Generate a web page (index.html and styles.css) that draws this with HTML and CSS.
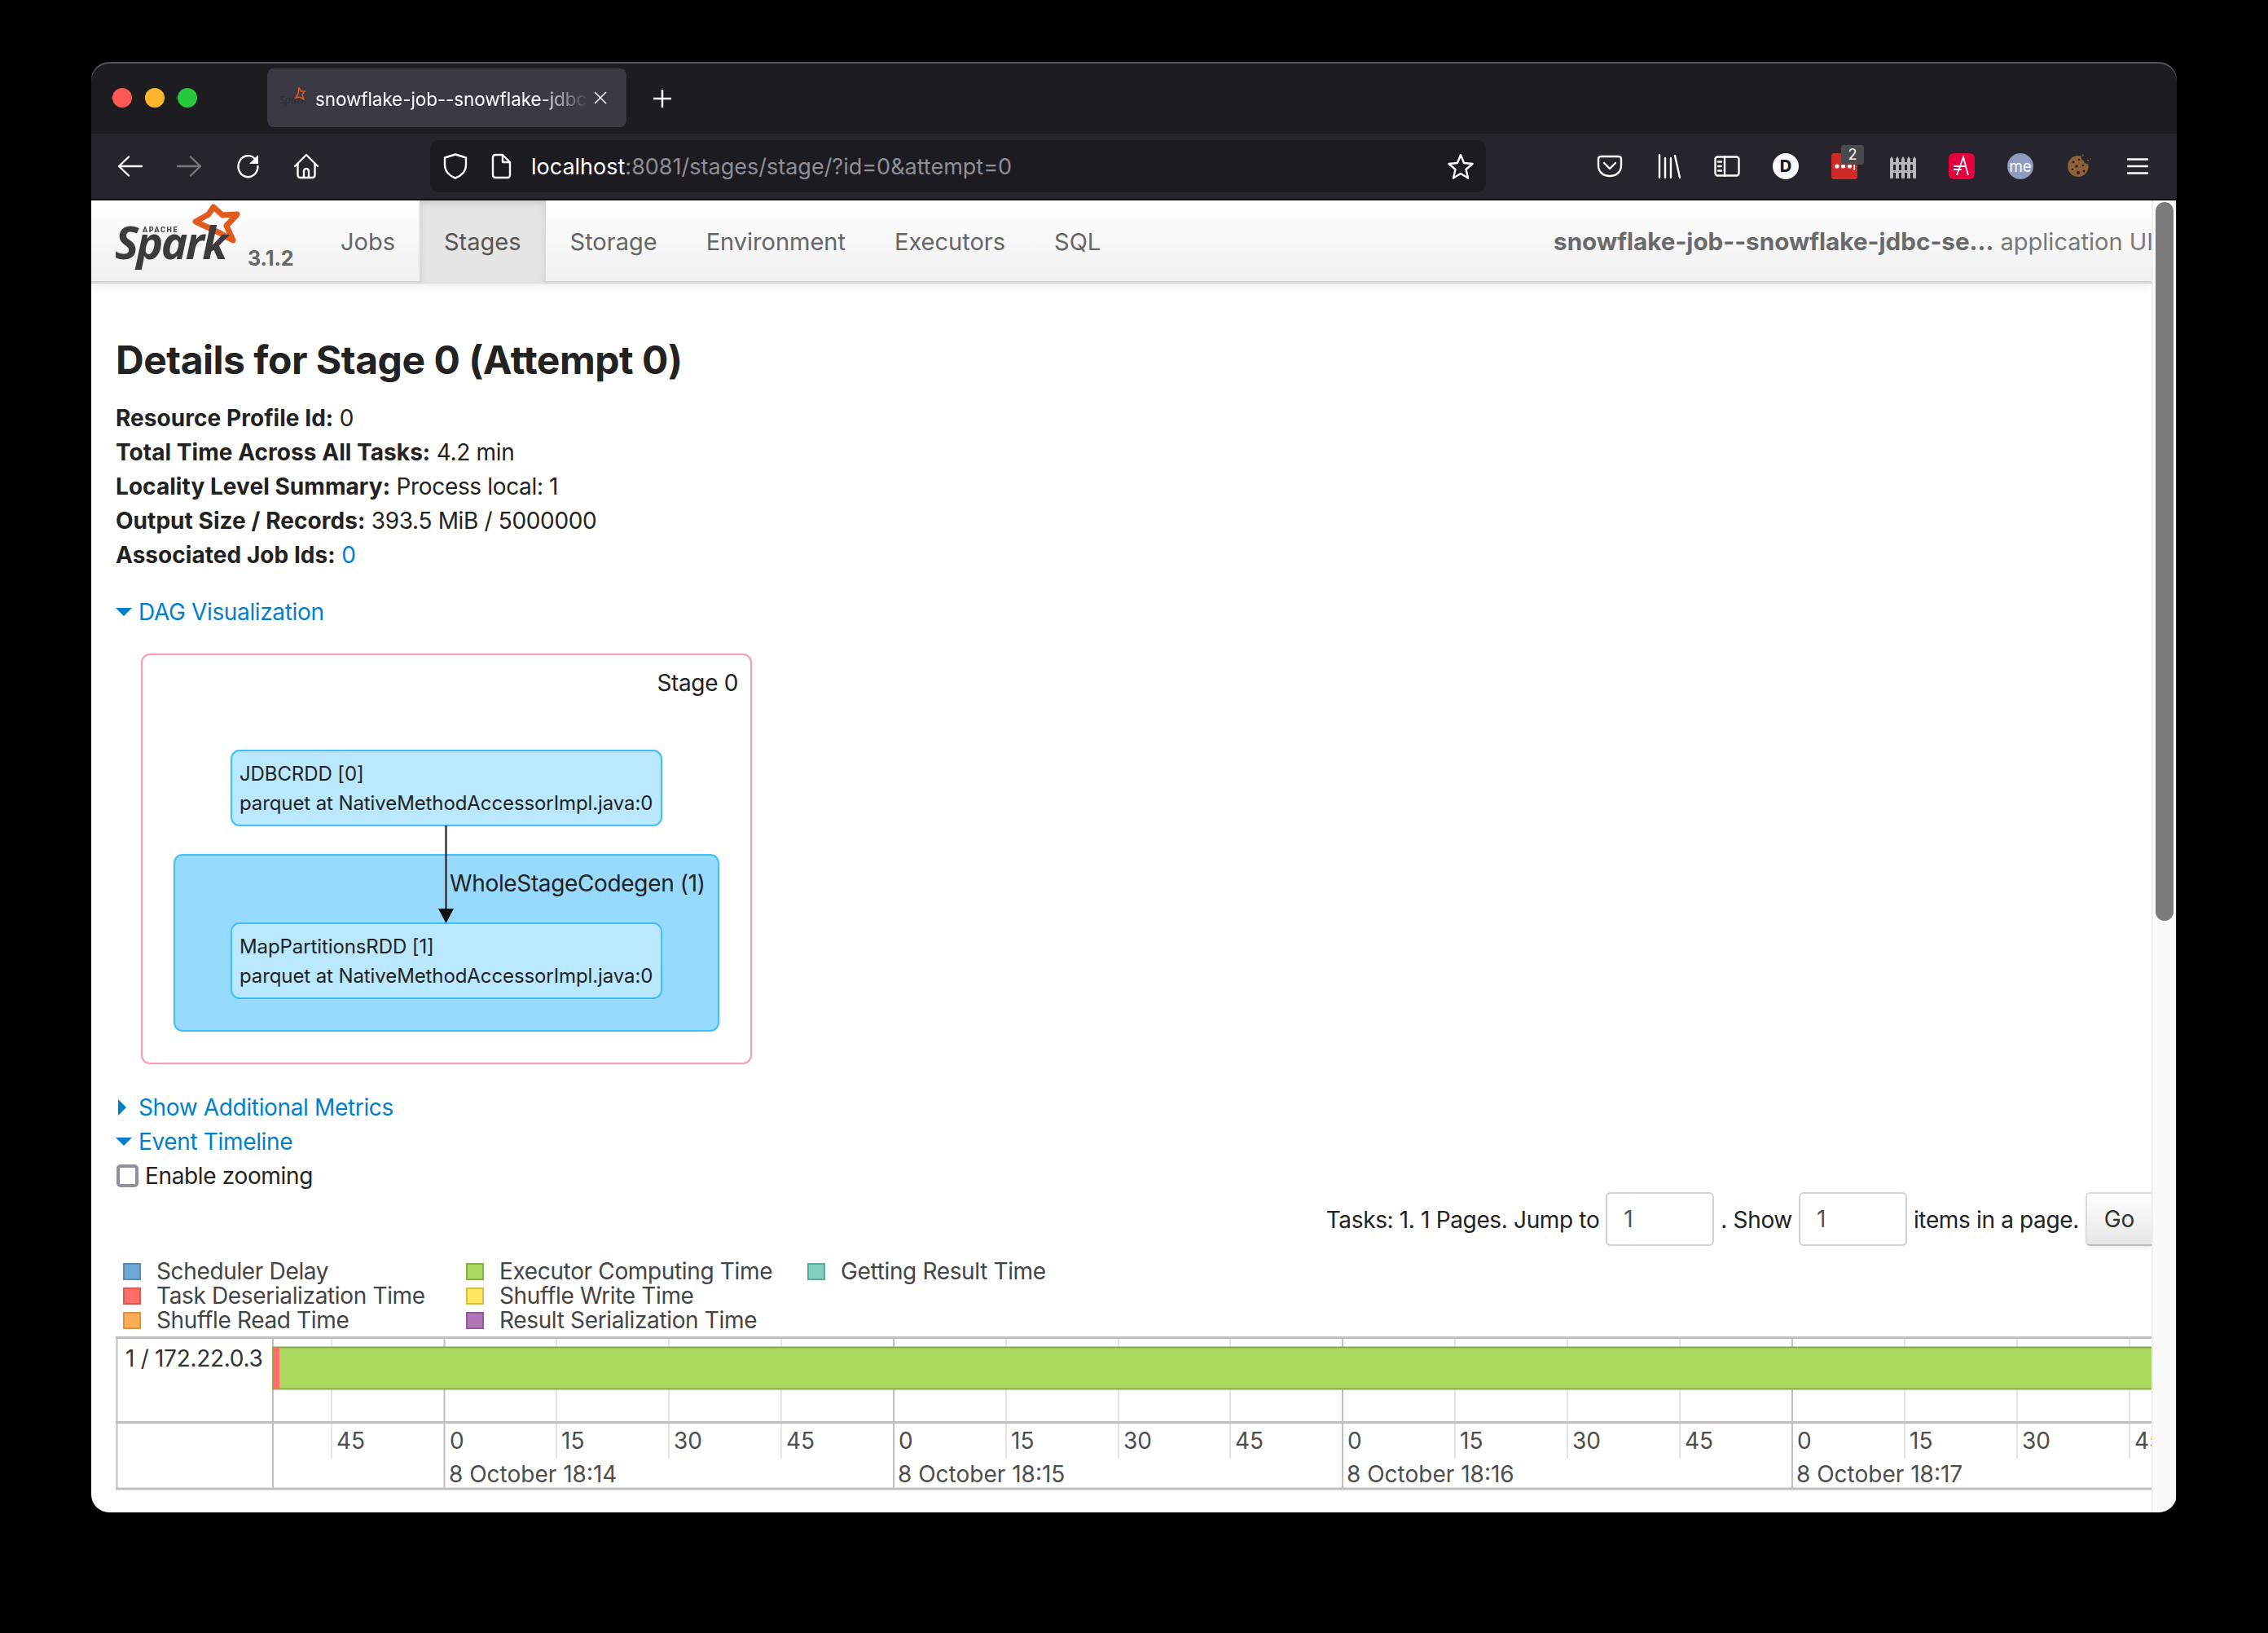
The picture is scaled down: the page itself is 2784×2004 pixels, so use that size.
FILE: index.html
```html
<!DOCTYPE html>
<html lang="en">
<head>
<meta charset="utf-8">
<title>snowflake-job--snowflake-jdbc-session - Details for Stage 0</title>
<link rel="stylesheet" href="styles.css">
</head>
<body>
<div class="window">
  <div class="tabbar">
    <div class="lights"><span class="light red"></span><span class="light yellow"></span><span class="light green"></span></div>
    <div class="tab">
      <svg class="favicon" viewBox="0 0 32 24"><text x="0" y="21" class="fav-text">Spark</text><path d="M24 1l2 5 5 0-3 4 2 6-5-3-5 1 3-5z" class="fav-star"/></svg>
      <span class="tab-title">snowflake-job--snowflake-jdbc-session</span>
      <svg class="tab-close" viewBox="0 0 16 16"><path d="M1 1l14 14M15 1L1 15"/></svg>
    </div>
    <svg class="newtab" viewBox="0 0 24 24"><path d="M12 1v22M1 12h22"/></svg>
  </div>
  <div class="toolbar">
    <div class="nav-buttons">
      <svg class="ic" viewBox="0 0 32 32"><path d="M2 16h28M14 4.500L2 16l12 11.500"/></svg>
      <svg class="ic dim" viewBox="0 0 32 32"><path d="M2 16h28M18 4.500L30 16 18 27.500"/></svg>
      <svg class="ic" viewBox="0 0 32 32"><path d="M25 7a12 13 0 1 0 3.500 9"/><path class="fill" d="M29 2v11H18z"/></svg>
      <svg class="ic" viewBox="0 0 32 32"><path d="M2 16L16 2l14 14M5.500 13v14a3 3 0 0 0 3 3h15a3 3 0 0 0 3-3V13M13 30v-8a3 3 0 0 1 6 0v8"/></svg>
    </div>
    <div class="urlbar">
      <svg class="ic" viewBox="0 0 32 32"><path d="M16 1.500l13 4v9c0 8-6 13.500-13 16-7-2.500-13-8-13-16v-9z"/></svg>
      <svg class="ic doc" viewBox="0 0 32 32"><path d="M6 5a3 3 0 0 1 3-3h9l9 9v16a3 3 0 0 1-3 3H9a3 3 0 0 1-3-3zM18 2v9h9"/></svg>
      <span class="url"><span class="url-host">localhost</span>:8081/stages/stage/?id=0&amp;attempt=0</span>
      <svg class="ic star" viewBox="0 0 32 32"><path d="M16 2l4 10 10.500 1-8 7 2.500 10.500L16 25l-9 5.500L9.500 20l-8-7L12 12z"/></svg>
    </div>
    <div class="addons">
      <svg class="ic" viewBox="0 0 32 32"><path d="M5 4h22a3 3 0 0 1 3 3v8c0 8-6 13-14 13S2 23 2 15V7a3 3 0 0 1 3-3z"/><path d="M9 12l7 7 7-7"/></svg>
      <svg class="ic" viewBox="0 0 32 32"><path d="M5 2v28M12 6v24M19 6v24M24 3l6 27"/></svg>
      <svg class="ic" viewBox="0 0 32 32"><rect x="1.500" y="4.500" width="29" height="23" rx="3"/><path d="M13 4.500v23M5 10.500h4M5 16h4M5 21.500h4"/></svg>
      <div class="addon round white"><span class="d-letter">D</span></div>
      <div class="addon badge-host">
        <svg class="addon-fill" viewBox="0 0 32 32"><rect width="32" height="32" rx="3" fill="#d02a26"/><circle cx="7" cy="16" r="2.600" fill="#fff"/><circle cx="14.500" cy="16" r="2.600" fill="#fff"/><circle cx="22.500" cy="16" r="2.600" fill="#fff"/><rect x="27.500" y="12" width="1.500" height="9" fill="#fff"/></svg>
        <span class="badge">2</span>
      </div>
      <svg class="addon-fill" viewBox="0 0 32 32"><g fill="#b8b8bb"><path d="M0 7l2-3 2 3v24H0zM7 7l2-3 2 3v24H7zM14 7l2-3 2 3v24h-4zM21 7l2-3 2 3v24h-4zM28 7l2-3 2 3v24h-4z"/><rect y="11" width="32" height="3"/><rect y="21" width="32" height="3"/></g></svg>
      <svg class="addon-fill" viewBox="0 0 32 32"><rect width="32" height="32" rx="6" fill="#e4003f"/><path d="M10 27L18 5l6 22M6 16h14M6 20h10" fill="none" stroke="#fff" stroke-width="1.800"/></svg>
      <div class="addon round me"><span>me</span></div>
      <svg class="addon-fill" viewBox="0 0 32 32"><path d="M15 3c2 0 3 .5 4 1-1 3 1 5 3 5 0 3 2 4 4 4 1 0 1.500 1 1.500 3 0 7-5.500 13-12.500 13S2 23 2 16 8 3 15 3z" fill="#8e6239"/><g fill="#2e1d10"><circle cx="9" cy="11" r="1.500"/><circle cx="16" cy="8" r="1.200"/><circle cx="13" cy="16" r="1.800"/><circle cx="21" cy="15" r="1.300"/><circle cx="8" cy="20" r="1.200"/><circle cx="15" cy="24" r="2"/><circle cx="22" cy="22" r="1.500"/></g><g fill="#8e6239"><circle cx="21" cy="2.500" r="1"/><circle cx="27" cy="9" r="1"/><circle cx="30" cy="7" r=".8"/></g></svg>
      <svg class="ic" viewBox="0 0 32 32"><path d="M4 7.500h24M4 16h24M4 24.500h24"/></svg>
    </div>
  </div>
  <div class="viewport">
    <div class="page">
      <header class="navbar">
        <a class="brand">
          <svg class="logo" viewBox="142 248 155 84">
            <path class="logo-star" d="M262 254l11 10 18-1-13 14 8 18-16-9-15-7-15-7 16-9z"/>
            <text class="logo-apache" x="175" y="285">APACHE</text>
            <text class="logo-spark" x="141" y="318">Spark</text>
          </svg>
          <span class="version">3.1.2</span>
        </a>
        <nav class="nav-links">
          <a class="nav-link">Jobs</a>
          <a class="nav-link active">Stages</a>
          <a class="nav-link">Storage</a>
          <a class="nav-link">Environment</a>
          <a class="nav-link">Executors</a>
          <a class="nav-link">SQL</a>
        </nav>
        <p class="app-title"><strong>snowflake-job--snowflake-jdbc-se...</strong> application UI</p>
      </header>
      <main class="content">
        <h1 class="title">Details for Stage 0 (Attempt 0)</h1>
        <ul class="summary">
          <li><strong>Resource Profile Id:</strong> 0</li>
          <li><strong>Total Time Across All Tasks:</strong> 4.2 min</li>
          <li><strong>Locality Level Summary:</strong> Process local: 1</li>
          <li><strong>Output Size / Records:</strong> 393.5 MiB / 5000000</li>
          <li><strong>Associated Job Ids:</strong> <a class="link">0</a></li>
        </ul>
        <a class="link toggle dag-toggle"><span class="arrow open"></span>DAG Visualization</a>
        <svg class="dag" viewBox="170 800 760 510">
          <rect class="stage" x="174" y="803" width="748" height="502" rx="10"/>
          <text class="dag-label" x="906" y="848" text-anchor="end">Stage 0</text>
          <rect class="cluster" x="214" y="1049" width="668" height="216" rx="10"/>
          <text class="dag-label" x="552" y="1094">WholeStageCodegen (1)</text>
          <rect class="rdd" x="284" y="921" width="528" height="92" rx="10"/>
          <text class="rdd-text" x="294" y="958">JDBCRDD [0]</text>
          <text class="rdd-text" x="294" y="994">parquet at NativeMethodAccessorImpl.java:0</text>
          <rect class="rdd" x="284" y="1133" width="528" height="92" rx="10"/>
          <text class="rdd-text" x="294" y="1170">MapPartitionsRDD [1]</text>
          <text class="rdd-text" x="294" y="1206">parquet at NativeMethodAccessorImpl.java:0</text>
          <path class="edge" d="M547.500 1013V1118"/>
          <path class="edge-head" d="M538 1115h19l-9.500 18z"/>
        </svg>
        <a class="link toggle"><span class="arrow closed"></span>Show Additional Metrics</a>
        <a class="link toggle"><span class="arrow open"></span>Event Timeline</a>
        <label class="zoom-check"><input type="checkbox" class="checkbox"><span>Enable zooming</span></label>
        <div class="pager">
          <span class="pager-text">Tasks: 1. 1 Pages. Jump to</span>
          <input class="pager-input" value="1">
          <span class="pager-text">. Show</span>
          <input class="pager-input" value="1">
          <span class="pager-text">items in a page.</span>
          <button class="go">Go</button>
        </div>
        <div class="legend">
          <div class="legend-item"><span class="swatch blue"></span>Scheduler Delay</div>
          <div class="legend-item"><span class="swatch coral"></span>Task Deserialization Time</div>
          <div class="legend-item"><span class="swatch orange"></span>Shuffle Read Time</div>
          <div class="legend-item"><span class="swatch lime"></span>Executor Computing Time</div>
          <div class="legend-item"><span class="swatch sun"></span>Shuffle Write Time</div>
          <div class="legend-item"><span class="swatch plum"></span>Result Serialization Time</div>
          <div class="legend-item"><span class="swatch teal"></span>Getting Result Time</div>
        </div>
        <svg class="timeline" viewBox="142 1640 2499 190">
          <g class="minor">
            <path d="M407 1641V1790M683 1641V1790M821 1641V1790M959 1641V1790M1235 1641V1790M1373 1641V1790M1510 1641V1790M1786 1641V1790M1924 1641V1790M2062 1641V1790M2338 1641V1790M2476 1641V1790M2614 1641V1790"/>
          </g>
          <path class="major" d="M545.500 1641V1827M1097 1641V1827M1648 1641V1827M2200 1641V1827M143.500 1641V1827M335 1641V1827"/>
          <path class="axis" d="M142 1641.500H2641M142 1745.500H2641M142 1827H2641"/>
          <rect class="bar-green" x="335" y="1653.500" width="2320" height="51"/>
          <rect class="bar-red" x="335" y="1653.500" width="8" height="51"/>
          <text class="tl-label" x="154" y="1677">1 / 172.22.0.3</text>
          <g class="tl-text">
            <text x="413" y="1778">45</text>
            <text x="552" y="1778">0</text><text x="689" y="1778">15</text><text x="827" y="1778">30</text><text x="965" y="1778">45</text>
            <text x="1103" y="1778">0</text><text x="1241" y="1778">15</text><text x="1379" y="1778">30</text><text x="1516" y="1778">45</text>
            <text x="1654" y="1778">0</text><text x="1792" y="1778">15</text><text x="1930" y="1778">30</text><text x="2068" y="1778">45</text>
            <text x="2206" y="1778">0</text><text x="2344" y="1778">15</text><text x="2482" y="1778">30</text><text x="2620" y="1778">45</text>
            <text x="551" y="1819">8 October 18:14</text>
            <text x="1102" y="1819">8 October 18:15</text>
            <text x="1653" y="1819">8 October 18:16</text>
            <text x="2205" y="1819">8 October 18:17</text>
          </g>
        </svg>
      </main>
    </div>
    <div class="scrollbar"><div class="thumb"></div></div>
  </div>
</div>
</body>
</html>
```
FILE: styles.css
```css
* { box-sizing: border-box; }
html, body { margin: 0; padding: 0; height: 2004px; overflow: hidden; background: #000; }
body { font-family: Inter, "Liberation Sans", sans-serif; }

.window {
  margin: 76px 0 0 112px;
  width: 2560px;
  height: 1780px;
  border-radius: 22px;
  overflow: hidden;
  background: #1c1c21;
  display: flex;
  flex-direction: column;
  box-shadow: inset 0 2px 0 #55555a;
}

/* Tab strip */
.tabbar { height: 88px; flex: none; display: flex; align-items: flex-start; }
.lights { display: flex; gap: 16px; padding: 32px 0 0 26px; width: 217px; flex: none; }
.light { width: 24px; height: 24px; border-radius: 50%; }
.light.red { background: #ff5a52; }
.light.yellow { background: #ffb52b; }
.light.green { background: #28c83c; }
.tab {
  margin-top: 8px;
  margin-left: -1px;
  width: 441px;
  height: 72px;
  border-radius: 8px;
  background: #3b3a44;
  display: flex;
  align-items: center;
  padding: 3px 20px 0 15px;
  flex: none;
}
.favicon { width: 32px; height: 24px; flex: none; margin-top: -8px; }
.fav-text { font-size: 13px; font-style: italic; fill: #2b2b2f; font-family: "Open Sans", sans-serif; }
.fav-star { fill: none; stroke: #d9581f; stroke-width: 1.6; }
.tab-title {
  margin-left: 12px;
  width: 335px;
  font-size: 22.500px;
  letter-spacing: -.1px;
  color: #fff;
  white-space: nowrap;
  overflow: hidden;
  -webkit-mask-image: linear-gradient(to right, #000 82%, transparent 100%);
  mask-image: linear-gradient(to right, #000 82%, transparent 100%);
}
.tab-close { width: 16px; height: 16px; margin: -3px 0 0 7px; flex: none; }
.tab-close path { stroke: #fff; stroke-width: 1.500; fill: none; }
.newtab { width: 24px; height: 24px; margin: 33px 0 0 32px; flex: none; }
.newtab path { stroke: #fff; stroke-width: 2.5; fill: none; }

/* Toolbar */
.toolbar {
  height: 82px;
  flex: none;
  background: #26252e;
  border-bottom: 2px solid #101014;
  display: flex;
  align-items: center;
}
.ic { width: 32px; height: 32px; flex: none; }
.ic path, .ic rect { fill: none; stroke: #fff; stroke-width: 2.4; stroke-linejoin: round; stroke-linecap: round; }
.ic .fill { fill: #fff; stroke: none; }
.ic.dim { opacity: .38; }
.nav-buttons { display: flex; gap: 40px; padding-left: 32px; flex: none; }
.urlbar {
  margin-left: 136px;
  width: 1296px;
  height: 64px;
  background: #1c1b22;
  border-radius: 10px;
  display: flex;
  align-items: center;
  padding: 0 15px 0 15px;
  flex: none;
}
.doc { margin-left: 24px; }
.url { margin-left: 21px; font-size: 27px; color: #8f8f96; flex: 1; white-space: nowrap; }
.url-host { color: #fff; }
.addons { margin-left: 136px; display: flex; gap: 40px; align-items: center; flex: none; }
.addon { width: 32px; height: 32px; flex: none; position: relative; }
.addon-fill { width: 32px; height: 32px; flex: none; display: block; }
.round { border-radius: 50%; display: flex; align-items: center; justify-content: center; }
.white { background: #fbfbfe; }
.d-letter { font-size: 20px; font-weight: 800; color: #1c1b22; }
.me { background: #8f9bbd; color: #fff; font-size: 19px; font-weight: 400; }
.badge {
  position: absolute;
  top: -10px;
  left: 12px;
  width: 28px;
  height: 24px;
  background: #4a4a4c;
  border-radius: 3px;
  color: #fff;
  font-size: 18px;
  line-height: 24px;
  text-align: center;
}

/* Page */
.viewport { flex: 1; min-height: 0; display: flex; }
.page { width: 2529px; flex: none; background: #fff; overflow: hidden; }
.scrollbar { width: 30px; flex: none; background: #fafafa; border-left: 2px solid #eee; padding: 2px 3px 0 3px; }
.thumb { height: 882px; background: #7b7b7b; border-radius: 12px; }

.navbar {
  height: 102px;
  display: flex;
  background: linear-gradient(#fff, #f0f0f0);
  border-bottom: 3px solid #d4d4d4;
  box-shadow: 0 3px 14px rgba(0, 0, 0, .08);
  color: #666;
  font-size: 29px;
}
.brand { width: 276px; flex: none; display: flex; align-items: flex-start; padding: 2px 0 0 30px; }
.logo { width: 155px; height: 84px; flex: none; filter: blur(.6px); }
.logo-star { fill: none; stroke: #e25a1c; stroke-width: 7; stroke-linejoin: round; }
.logo-apache { font-family: Roboto, sans-serif; font-size: 9px; font-weight: 900; letter-spacing: 1.6px; fill: #4a4a4a; }
.logo-spark { font-family: "Open Sans", sans-serif; font-size: 55px; font-weight: 700; font-style: italic; letter-spacing: -2.6px; fill: #3b3b3b; }
.version { margin: 54px 0 0 7px; font-size: 25px; font-weight: 700; color: #666; }
.nav-links { display: flex; flex: none; }
.nav-link { padding: 0 30px; line-height: 101px; height: 102px; }
.nav-link.active { background: #e5e5e5; color: #555; box-shadow: inset 0 3px 8px rgba(0, 0, 0, .12); }
.app-title { margin: 0 0 0 auto; line-height: 101px; white-space: nowrap; width: 734px; flex: none; overflow: hidden; color: #777; }
.app-title strong { color: #6a6a6a; font-size: 29.700px; }

.content { padding: 64px 0 0 30px; color: #222; font-size: 28px; line-height: 42px; letter-spacing: -.35px; }
.content strong { letter-spacing: .05px; }
.title { margin: 0 0 20px; font-size: 48px; line-height: 60px; font-weight: 700; color: #222; letter-spacing: -.48px; }
.summary { list-style: none; margin: 0; padding: 0; height: 210px; }
.link { color: #0080cc; }
.toggle { display: block; height: 42px; white-space: nowrap; }
.dag-toggle { margin-top: 28px; }
.arrow { display: inline-block; width: 28px; vertical-align: middle; position: relative; height: 14px; margin-top: -4px; }
.arrow.open::before { content: ""; position: absolute; left: 0; top: 2px; border: 10px solid transparent; border-top-color: #0080cc; border-bottom-width: 0; }
.arrow.closed::before { content: ""; position: absolute; left: 3px; top: -3px; border: 10px solid transparent; border-left-color: #0080cc; border-right-width: 0; }

.dag { display: block; width: 760px; height: 510px; margin: 28px 0 28px 28px; }
.stage { fill: #fff; stroke: #ff99ac; stroke-width: 2; }
.cluster { fill: #97d9ff; stroke: #3ec0ff; stroke-width: 2; }
.rdd { fill: #bae8ff; stroke: #3ec0ff; stroke-width: 2; }
.dag-label { font-size: 28px; fill: #222; font-family: Inter, sans-serif; }
.rdd-text { font-size: 24px; fill: #222; font-family: Inter, sans-serif; letter-spacing: -.1px; }
.edge { stroke: #333; stroke-width: 2.4; fill: none; }
.edge-head { fill: #111; }

.zoom-check { display: flex; align-items: center; gap: 8px; height: 42px; margin-left: 1px; }
.checkbox { appearance: none; margin: 0; width: 27px; height: 28px; border: 4px solid #8f8f9d; border-radius: 5px; background: #fff; }

.pager { display: flex; justify-content: flex-end; align-items: center; gap: 8px; height: 66px; margin-top: -1px; }
.pager-text { padding-top: 2px; }
.pager-input {
  width: 133px;
  height: 66px;
  border: 2px solid #ccd2d8;
  border-radius: 6px;
  padding: 0 20px;
  font: 28px Inter, sans-serif;
  color: #555;
  background: #fff;
}
.go {
  width: 81px;
  height: 66px;
  border: 2px solid #ddd;
  border-bottom-color: #bbb;
  border-right: 0;
  border-radius: 6px 0 0 6px;
  background: linear-gradient(#fff, #e6e6e6);
  font: 28px Inter, sans-serif;
  color: #333;
  box-shadow: 0 2px 4px rgba(0, 0, 0, .08);
}

.legend {
  margin: 16px 0 5px 9px;
  display: grid;
  grid-auto-flow: column;
  grid-template-rows: repeat(3, 30px);
  grid-template-columns: 421px 419px auto;
  color: #444;
  line-height: 30px;
}
.legend-item { display: flex; align-items: center; gap: 19px; white-space: nowrap; }
.swatch { width: 22px; height: 21px; border: 2px solid; flex: none; }
.blue { background: #71a6d2; border-color: #5c89ad; }
.coral { background: #ff6e66; border-color: #d85a52; }
.orange { background: #ffac56; border-color: #d9924a; }
.lime { background: #a9da5e; border-color: #87ad4c; }
.sun { background: #ffe95f; border-color: #d4c04e; }
.plum { background: #b174b6; border-color: #8f5d93; }
.teal { background: #82cfc0; border-color: #5fa89a; }

.timeline { display: block; width: 2499px; height: 190px; margin-left: 0; }
.minor path { stroke: #e5e5e5; stroke-width: 2; fill: none; }
.major { stroke: #bfbfbf; stroke-width: 2; fill: none; }
.axis { stroke: #bfbfbf; stroke-width: 3; fill: none; }
.bar-green { fill: #aad95e; stroke: #86a94d; stroke-width: 2; }
.bar-red { fill: #ff6e66; stroke: none; }
.tl-label { font-size: 28px; fill: #333; font-family: Inter, sans-serif; letter-spacing: -.3px; }
.tl-text text { font-size: 28px; fill: #4d4d4d; font-family: Inter, sans-serif; letter-spacing: 0; }
```
